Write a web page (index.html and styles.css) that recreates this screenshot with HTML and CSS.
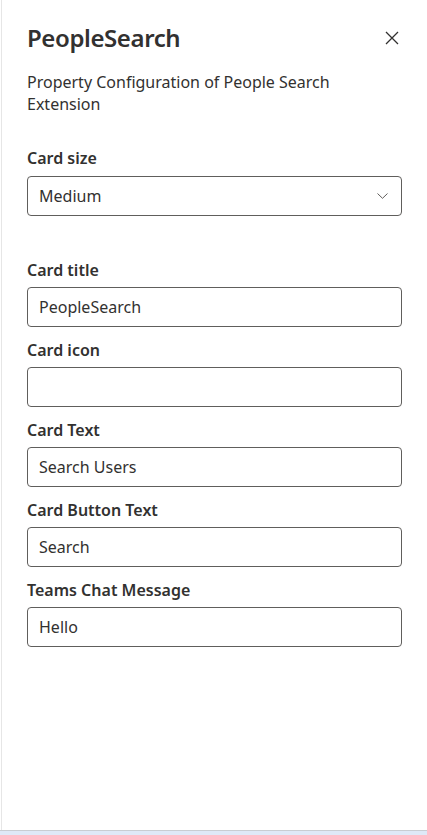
FILE: index.html
```html
<!DOCTYPE html>
<html lang="en">
<head>
<meta charset="utf-8">
<title>PeopleSearch</title>
<link rel="stylesheet" href="styles.css">
</head>
<body>
<div class="panel">
  <div class="header">
    <h1 class="title">PeopleSearch</h1>
    <button class="close" aria-label="Close">
      <svg width="14" height="14" viewBox="0 0 14 14"><path d="M1 1L13 13M13 1L1 13" stroke="#323130" stroke-width="1.3" fill="none"/></svg>
    </button>
  </div>
  <p class="desc">Property Configuration of People Search Extension</p>

  <div class="field first">
    <label class="label">Card size</label>
    <div class="input dropdown">
      <span>Medium</span>
      <svg width="11" height="6" viewBox="0 0 11 6"><path d="M0.5 0.5L5.5 5.3L10.5 0.5" stroke="#605e5c" stroke-width="1" fill="none"/></svg>
    </div>
  </div>

  <div class="field spaced">
    <label class="label">Card title</label>
    <div class="input">PeopleSearch</div>
  </div>
  <div class="field">
    <label class="label">Card icon</label>
    <div class="input"></div>
  </div>
  <div class="field">
    <label class="label">Card Text</label>
    <div class="input">Search Users</div>
  </div>
  <div class="field">
    <label class="label">Card Button Text</label>
    <div class="input">Search</div>
  </div>
  <div class="field">
    <label class="label">Teams Chat Message</label>
    <div class="input">Hello</div>
  </div>
</div>
<div class="bottom-bar"></div>
</body>
</html>
```

FILE: styles.css
```css
html, body {
  margin: 0;
  padding: 0;
  height: 100%;
}
body {
  display: flex;
  flex-direction: column;
  background: #ffffff;
  font-family: "Noto Sans", "Open Sans", sans-serif;
  color: #323130;
}
.panel {
  flex: 1;
  margin-left: 1px;
  border-left: 1px solid #e6e6e6;
  padding: 0 25px 0 25px;
  display: flex;
  flex-direction: column;
}
.header {
  display: flex;
  align-items: flex-start;
  justify-content: space-between;
  margin-top: 22px;
}
.title {
  margin: 0;
  font-size: 24px;
  line-height: 32px;
  font-weight: 600;
  letter-spacing: -0.4px;
}
.close {
  border: 0;
  background: none;
  padding: 0;
  margin: 9px 3px 0 0;
  width: 14px;
  height: 14px;
  display: flex;
}
.desc {
  margin: 17px 0 0 0;
  padding-right: 30px;
  font-size: 16px;
  line-height: 22px;
}
.field {
  display: flex;
  flex-direction: column;
  gap: 6px;
  padding-top: 12px;
}
.field.first {
  padding-top: 32px;
  gap: 7px;
}
.field.spaced {
  padding-top: 43px;
}
.label {
  font-size: 16px;
  line-height: 22px;
  font-weight: 600;
}
.input {
  box-sizing: border-box;
  height: 40px;
  border: 1px solid #605e5c;
  border-radius: 4px;
  padding: 0 11px;
  display: flex;
  align-items: center;
  font-size: 16px;
}
.dropdown {
  justify-content: space-between;
  padding-right: 13px;
}
.bottom-bar {
  height: 4px;
  border-top: 1px solid #c9cdd2;
  background: #dfe9f7;
}
```
